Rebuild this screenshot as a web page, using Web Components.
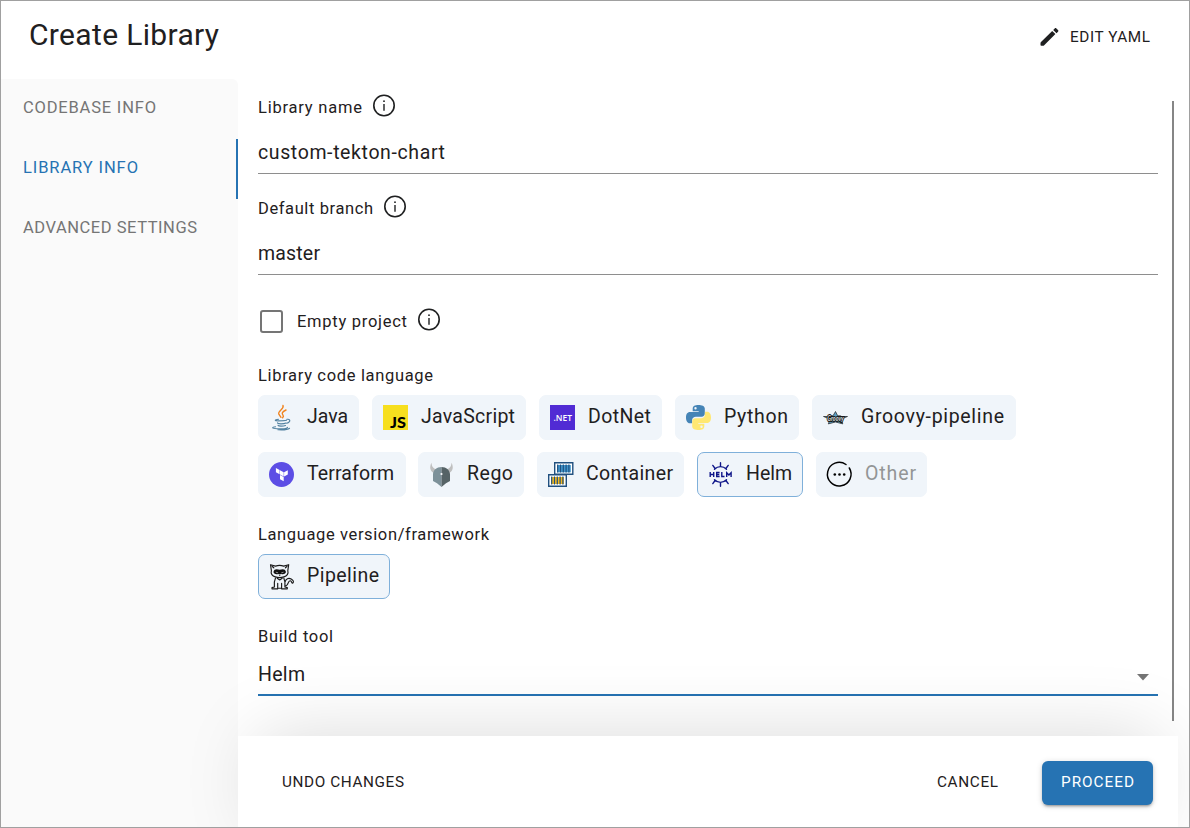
<!DOCTYPE html>
<html lang="en">
<head>
<meta charset="utf-8">
<title>Create Library</title>
<style>
html,body{margin:0;height:100%}
body{font-family:Roboto,"Open Sans",sans-serif;color:#1f2021;background:#fff}
</style>
</head>
<body>
<library-dialog></library-dialog>
<script>
/* Brand marks, each drawn in a 26 x 26 box. */
const PY = 'M12.400 0C9 0 6.700 1 6.700 3.500v2.700h6v.8H4C1.300 7 0 9.300 0 12.500s1.300 5.800 3.800 5.800h2.300v-3c0-2.200 1.700-3.600 3.800-3.600h5.700c1.900 0 3.200-1.400 3.200-3.200v-5C18.800 1 15.800 0 12.400 0zM9.500 2a1.200 1.200 0 1 1 0 2.400 1.200 1.200 0 0 1 0-2.400z';
const ICONS = {
java:`<g fill="none" stroke-linecap="round"><path d="M14.500 1c1.500 4-6 5-4 9l2 2.800M17.500 5.500c-4 2-4.500 3.200-3 5.200.8 1 .4 1.800-.4 2.600" stroke="#f0831e" stroke-width="1.400"/><g stroke="#5382a1" stroke-width="1.150"><path d="M10 14.800c-4.500.8-4 1.500 0 1.500 3 0 6 0 8-.5M9 18.300c0 1.400 6.500 1.200 8.500.2M9.500 20.800c.4 1.200 5.500 1 7.500.2M18.500 14.800c3.500-.6 4 2.500-.2 3.900M7 22.300c-4 .5-4 1.700 1.500 2 5 .3 10.500 0 10.500-1.600M9.500 25.300c5 .3 10-.2 11.500-1.500"/></g></g>`,
js:`<path d="M.5.5h25v25H.5z" fill="#f7df1e"/><text x="7.500" y="23" font-family="Lato" font-weight="900" font-size="14.500" textLength="16" lengthAdjust="spacingAndGlyphs">JS</text>`,
net:`<path d="M.5.5h25v25H.5z" fill="#512bd4"/><text x="4" y="16.300" font-family="Open Sans" font-weight="600" font-size="9" fill="#fff" textLength="18.500" lengthAdjust="spacingAndGlyphs">.NET</text>`,
python:`<g transform="translate(.5 .5)" fill-rule="evenodd"><path fill="#4584b6" d="${PY}"/><path fill="#ffe873" transform="rotate(180 12.500 12.500)" d="${PY}"/></g>`,
groovy:`<path d="M13 7l2.200 4.300h3l-.5.700H25l-6.500 2.600 1.800 4.800-7.300-1.900-7.200 1.900 1.700-4.800L1 12h7l-.5-.7h3z" fill="#5b9ec4" stroke="#222" stroke-width=".7"/><text x="4.800" y="16" font-family="Lato" font-weight="900" font-style="italic" font-size="7.500" fill="#cfd6d8" stroke="#171717" stroke-width="2" paint-order="stroke" textLength="16.500" lengthAdjust="spacingAndGlyphs">Groovy</text>`,
terraform:`<circle cx="13" cy="13" r="12.500" fill="#5c4ee5"/><path fill="#fff" d="M7.400 6.400l3.700 2.100v4.300l-3.700-2.100zM11.500 8.700l3.700 2.100v4.300l-3.700-2.100zM15.600 10.800l3.700-2.100V13l-3.700 2.100zM11.500 13.400l3.700 2.100v4.300l-3.700-2.100z"/>`,
rego:`<path d="M5.500 11.500C1.300 9.800.8 5.500 3 1.300c.3 3.700 1.300 5.300 5.300 6.900zM20.500 11.500c4.200-1.700 4.700-6 2.500-10.200-.3 3.700-1.300 5.300-5.300 6.900z" fill="#bfbfbf"/><path d="M13 5.500C8 5.600 5 8.500 4.500 12.500v7l4 2.200L13 25.500z" fill="#7d9199"/><path d="M13 5.500c5 .1 8 3 8.500 7v7l-4 2.200-4.500 3.800z" fill="#566366"/><circle cx="13" cy="12.500" r="1.100" fill="#fff"/>`,
container:`<g fill="#fff" stroke="#21507f" stroke-width="1.400"><path d="M7.200 1.200h18.100v11.600H7.200z"/><path d="M1.200 13.200h17.600v11.600H1.200z"/></g><path d="M9.500 3.500h13.800v7.300H9.500z" fill="#4298cf"/><path d="M3.500 15.500h13v7h-13z" fill="#f5b91d"/><path d="M10.200 3v8M13 3v8M15.800 3v8M18.600 3v8M21.400 3v8M4.200 15v8M7 15v8M9.800 15v8M12.600 15v8M15.400 15v8" stroke="#21507f" stroke-width="1.200"/>`,
helm:`<g fill="none" stroke="#0f1689" stroke-width="1.400" stroke-linecap="round"><path d="M7 7.800c3.500-3.600 8.500-3.600 12 0M7 18.200c3.500 3.600 8.500 3.600 12 0M13 5V1.300M7.600 7L5.300 3.900M18.400 7l2.300-3.100M13 21v3.700M7.600 19l-2.300 3.100M18.400 19l2.300 3.100"/><path stroke-linecap="butt" d="M2.700 10.400v5.200M6.200 10.400v5.200M2.700 13h3.500M12.100 11H9.200v4h2.900M9.200 13h2.600M14.300 10.400V15h2.700M19.200 15.600v-4.400l2.200 2.300 2.200-2.300v4.400" stroke-width="1.400"/></g>`,
other:`<path d="M19.500 3A11.800 11.800 0 1 0 22.800 6.500" fill="none" stroke="#000" stroke-width="1.500" stroke-linecap="round"/><circle cx="8.300" cy="13" r="1.300"/><circle cx="13" cy="13" r="1.300"/><circle cx="17.700" cy="13" r="1.300"/>`,
cat:`<g fill="none" stroke="#1a1a1a" stroke-width="1.150" stroke-linejoin="round" stroke-linecap="round"><path d="M2.900 7.200L2 1.200l5 1.400c2.700-1 5.500-1 8.200 0l5-1.400-.9 6c1 3-.9 5.300-3.900 6.200-2.900.9-5.700.9-8.600 0-3-.9-4.900-3.200-3.900-6.200zM3.800 3l1.500 1.300M18.400 3l-1.500 1.300"/><path d="M7 14.500c-1.500 3-1.400 5.800-1.100 9l-2.400.6v1.200h5.700M15.300 14.500c1.500 3 1.400 5.800 1.100 9l2.400.6v1.200h-5.700M9.200 25.300v-5.500M13.100 25.300v-5.500M9.200 24.700h3.900M8.700 14.800l2.500 1.700 2.500-1.700M16.700 18.200c.6-3 3.400-4.200 6-2.700 2.400 1.400 2.800 3 1.600 4.200-1.400.4-.8-2-2.600-2.400-2.600-.4-1.300 5.200-5.100 5.200"/></g><path d="M5 8.300C5.500 5.500 8 5.300 11.200 6.300c3.200-1 5.700-.8 6.200 2 .2 2.100-2.500 2.800-4.700 2.200l-1.500.6-1.500-.6C7.500 11.100 4.800 10.400 5 8.300z" fill="#111"/><path d="M7.300 8.700l2.300.6M15.100 8.700l-2.300.6" stroke="#aaa" stroke-width=".8"/><path d="M10.300 11.800h1.800l-.9 1z"/>`
};

const define = (name, css, html, after) => {
  const t = document.createElement('template');
  t.innerHTML = `<style>*{box-sizing:border-box}${css}</style>${html}`;
  customElements.define(name, class extends HTMLElement {
    constructor() {
      super();
      this.attachShadow({ mode: 'open' }).append(t.content.cloneNode(true));
    }
    connectedCallback() { if (after) after(this, this.shadowRoot); }
  });
};

/* One line of text whose tracking is spread over a given width. */
define('fit-text', `
:host{display:block;white-space:nowrap;flex:none;line-height:24px;height:24px}
span{display:inline-block}`, `<span><slot></slot></span>`, (el, root) => {
  const s = root.querySelector('span'), w = +el.getAttribute('w');
  el.style.width = w + 'px';
  s.style.letterSpacing = '0px';
  const n = el.textContent.length;
  s.style.letterSpacing = ((w - s.getBoundingClientRect().width) / (n - 1)).toFixed(3) + 'px';
});

define('info-icon', `:host{display:block;width:24px;height:24px;flex:none}svg{display:block}`,
`<svg width="24" height="24" viewBox="0 0 24 24" fill="none" stroke="#1f2021"><circle cx="12" cy="11.500" r="10.200" stroke-width="1.600"/><path d="M12 10v6.800" stroke-width="1.400"/><circle cx="12" cy="7.200" r=".9" fill="#1f2021" stroke="none"/></svg>`);

define('field-label', `:host{display:flex;font-size:16.5px;height:24px;gap:10px}
::slotted(info-icon){margin-top:-2px}`, `<slot></slot>`);

define('text-field', `:host{display:block;height:101px}
.v{font-size:19.5px;padding-top:21px;height:54px;border-bottom:1px solid #8e8e8e}`,
`<slot name="label"></slot><div class="v"><slot></slot></div>`);

define('select-field', `:host{display:block}
.v{font-size:19.5px;padding:14px 9px 0 0;height:47px;border-bottom:2px solid #2673b3;display:flex;justify-content:space-between}
svg{margin-top:11px}`,
`<slot name="label"></slot><div class="v"><slot></slot><svg width="12" height="7"><path d="M0 0h12L6 6.400z" fill="#757575"/></svg></div>`);

define('check-box', `:host{display:flex;align-items:center;height:24px}
i{width:23px;height:23px;border:2.5px solid #757575;border-radius:3px;margin:1px 14px 0 2px}
::slotted(field-label){margin-top:1px}`,
`<i></i><slot></slot>`);

define('tool-icon', `:host{display:block;width:25px;height:25px;flex:none}svg{display:block;overflow:visible}`, `<div></div>`, (el, root) => {
  root.querySelector('div').innerHTML = `<svg width="25" height="25" viewBox=".5 .5 25 25">${ICONS[el.getAttribute('name')]}</svg>`;
});

define('option-chip', `
:host{display:flex;align-items:center;height:45px;border:1px solid #f0f5fa;border-radius:7px;background:#f0f5fa;padding-left:10px;gap:13px;font-size:19.5px;flex:none;box-sizing:border-box}
:host([selected]){border-color:#7fb0da}
:host([disabled]){color:#939596}
::slotted(fit-text){margin-top:-1px}`, `<slot></slot>`);

define('chip-row', `:host{display:flex;height:45px}`, `<slot></slot>`);

define('nav-item', `
:host{display:flex;align-items:center;height:60px;padding-left:22px;font-size:16.5px;color:#757575}
:host([active]){color:#2673b3;border-right:2px solid #2673b3}
::slotted(fit-text){margin-top:-3px}`, `<slot></slot>`);

define('side-nav', `:host{display:block;width:237px;flex:none;background:#fafafa;border-top-right-radius:6px}`, `<slot></slot>`);

define('dialog-header', `:host{display:flex;height:78px;flex:none;padding:22px 39px 0 28px;justify-content:space-between;box-sizing:border-box}
.t{font-size:30px}.e{display:flex;gap:9px;font-size:15.3px;padding-top:2px}`,
`<div class="t"><fit-text w="190">Create Library</fit-text></div>
<div class="e"><svg width="24" height="24" viewBox="0 0 24 24" fill="#1f2021"><path d="M3.500 18.200c0-.5.200-.8.500-1.100L15.200 5.900l3.200 3.200L7.200 20.300c-.4.400-.7.500-1.200.500H4.300a.8.8 0 0 1-.8-.8zM16.200 4.900l1.500-1.500c.5-.5 1.200-.5 1.700 0l1.600 1.600c.5.500.5 1.200 0 1.700l-1.500 1.500z"/></svg><fit-text w="80">EDIT YAML</fit-text></div>`);

define('action-bar', `
:host{display:flex;align-items:center;position:relative;isolation:isolate;height:91px;width:940px;font-size:15.3px;padding:0 25px 0 44px;box-sizing:border-box}
.shade,.fill{position:absolute;inset:0;z-index:-1;background:#fff}
.shade{inset:0 20px;box-shadow:0 0 75px rgba(0,0,0,.15)}
.g{flex:1}
.p{display:flex;align-items:center;justify-content:center;width:111px;height:44px;border-radius:6px;background:#2673b3;color:#fff;margin:2px 0 0 44px;box-shadow:0 3px 2px -2px rgba(0,0,0,.2),0 2px 3px rgba(0,0,0,.16),0 1px 6px rgba(0,0,0,.14)}
.p fit-text{margin-top:-2px}`,
`<div class="shade"></div><div class="fill"></div><fit-text w="122">UNDO CHANGES</fit-text><span class="g"></span><fit-text w="61">CANCEL</fit-text><div class="p"><fit-text w="73">PROCEED</fit-text></div>`);

define('library-form', `
:host{display:block;width:900px;margin:17px 0 0 20px}
check-box{margin-top:11px}
.l{margin-top:31px}.a{margin-top:7px}.b{margin-top:12px}.s{margin-top:26px}.c{margin-top:7px}.d{margin-top:26px}`, `
<text-field><field-label slot="label"><fit-text w="104">Library name</fit-text><info-icon></info-icon></field-label><fit-text w="187">custom-tekton-chart</fit-text></text-field>
<text-field><field-label slot="label"><fit-text w="115">Default branch</fit-text><info-icon></info-icon></field-label><fit-text w="62">master</fit-text></text-field>
<check-box><field-label><fit-text w="110">Empty project</fit-text><info-icon></info-icon></field-label></check-box>
<field-label class="l"><fit-text w="175">Library code language</fit-text></field-label>
<chip-row class="a">
<option-chip style="width:101px;margin-right:13px"><tool-icon name="java"></tool-icon><fit-text w="41">Java</fit-text></option-chip>
<option-chip style="width:154px;margin-right:13px"><tool-icon name="js"></tool-icon><fit-text w="94">JavaScript</fit-text></option-chip>
<option-chip style="width:123px;margin-right:13px"><tool-icon name="net"></tool-icon><fit-text w="63">DotNet</fit-text></option-chip>
<option-chip style="width:124px;margin-right:13px"><tool-icon name="python"></tool-icon><fit-text w="64">Python</fit-text></option-chip>
<option-chip style="width:204px"><tool-icon name="groovy"></tool-icon><fit-text w="143">Groovy-pipeline</fit-text></option-chip>
</chip-row>
<chip-row class="b">
<option-chip style="width:148px;margin-right:12px"><tool-icon name="terraform"></tool-icon><fit-text w="87">Terraform</fit-text></option-chip>
<option-chip style="width:106px;margin-right:13px"><tool-icon name="rego"></tool-icon><fit-text w="46">Rego</fit-text></option-chip>
<option-chip style="width:147px;margin-right:13px"><tool-icon name="container"></tool-icon><fit-text w="87">Container</fit-text></option-chip>
<option-chip selected style="width:106px;margin-right:13px"><tool-icon name="helm"></tool-icon><fit-text w="46">Helm</fit-text></option-chip>
<option-chip disabled style="width:111px"><tool-icon name="other"></tool-icon><fit-text w="51">Other</fit-text></option-chip>
</chip-row>
<field-label class="s"><fit-text w="231">Language version/framework</fit-text></field-label>
<chip-row class="c"><option-chip selected style="width:132px"><tool-icon name="cat"></tool-icon><fit-text w="72">Pipeline</fit-text></option-chip></chip-row>
<select-field class="d"><field-label slot="label"><fit-text w="75">Build tool</fit-text></field-label><fit-text w="47">Helm</fit-text></select-field>`);

define('library-dialog', `
:host{display:flex;flex-direction:column;width:1190px;height:828px;border:1px solid #a0a0a0;background:#fff;overflow:hidden;box-sizing:border-box}
.body{display:flex;flex:1;min-height:0}
.main{display:flex;flex-direction:column;flex:1;min-width:0}
.scroll{display:flex;height:657px;flex:none}
.bar{width:2px;height:620px;background:#868686;margin:22px 0 0 14px}`, `
<dialog-header></dialog-header>
<div class="body">
<side-nav>
<nav-item><fit-text w="133">CODEBASE INFO</fit-text></nav-item>
<nav-item active><fit-text w="115">LIBRARY INFO</fit-text></nav-item>
<nav-item><fit-text w="174">ADVANCED SETTINGS</fit-text></nav-item>
</side-nav>
<div class="main"><div class="scroll"><library-form></library-form><div class="bar"></div></div><action-bar></action-bar></div>
</div>`);
</script>
</body>
</html>
